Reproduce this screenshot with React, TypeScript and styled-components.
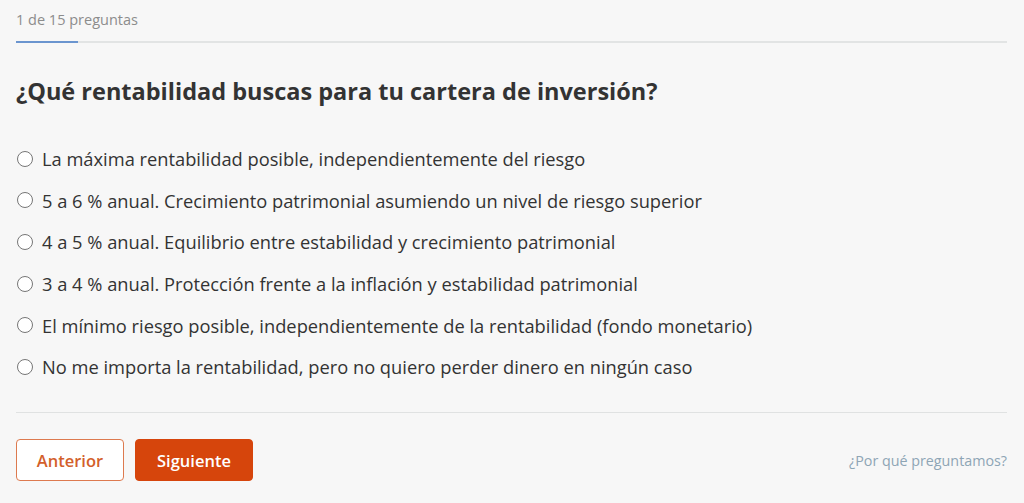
import * as React from "react";
import styled, { createGlobalStyle } from "styled-components";

const GlobalStyle = createGlobalStyle`
  html, body {
    margin: 0;
    padding: 0;
    background: #f7f7f7;
    font-family: "Open Sans", "Noto Sans", sans-serif;
    color: #333333;
  }
`;

const Page = styled.div`
  padding: 0 17px 0 16px;
`;

const Header = styled.div`
  padding-top: 10px;
`;

const Counter = styled.div`
  font-size: 14.5px;
  line-height: 19px;
  color: #8c8c8c;
`;

const Track = styled.div`
  margin-top: 12px;
  height: 2px;
  background: #e2e4e4;
  display: flex;
`;

const Fill = styled.div`
  height: 2px;
  background: #6b95cf;
`;

const Title = styled.h1`
  margin: 32px 0 0;
  font-size: 23.5px;
  line-height: 33px;
  font-weight: 700;
  color: #333333;
`;

const Options = styled.div`
  margin-top: 35px;
  display: flex;
  flex-direction: column;
  gap: 10.7px;
`;

const Option = styled.label`
  display: flex;
  align-items: center;
  height: 31px;
  font-size: 18.3px;
  color: #333333;
  cursor: pointer;
`;

const Radio = styled.span`
  width: 16px;
  height: 16px;
  box-sizing: border-box;
  border: 1px solid #767676;
  border-radius: 50%;
  background: #ffffff;
  margin: 0 9px 0 1px;
  flex-shrink: 0;
`;

const Divider = styled.div`
  margin-top: 30px;
  height: 1px;
  background: #e0e2e2;
`;

const Footer = styled.div`
  margin-top: 26px;
  display: flex;
  align-items: center;
  gap: 11px;
`;

const Button = styled.button<{ $primary?: boolean }>`
  height: 42px;
  width: ${(p) => (p.$primary ? "118px" : "108px")};
  padding: 0;
  font-family: inherit;
  font-size: 16.5px;
  font-weight: 600;
  border-radius: 4px;
  cursor: pointer;
  border: 1px solid ${(p) => (p.$primary ? "#d6450c" : "#dd7a4f")};
  background: ${(p) => (p.$primary ? "#d6450c" : "#ffffff")};
  color: ${(p) => (p.$primary ? "#ffffff" : "#d35f2b")};
`;

const HelpLink = styled.a`
  margin-left: auto;
  font-size: 14.3px;
  color: #8ea5b5;
  text-decoration: none;
  cursor: pointer;
`;

const answers = [
  "La máxima rentabilidad posible, independientemente del riesgo",
  "5 a 6 % anual. Crecimiento patrimonial asumiendo un nivel de riesgo superior",
  "4 a 5 % anual. Equilibrio entre estabilidad y crecimiento patrimonial",
  "3 a 4 % anual. Protección frente a la inflación y estabilidad patrimonial",
  "El mínimo riesgo posible, independientemente de la rentabilidad (fondo monetario)",
  "No me importa la rentabilidad, pero no quiero perder dinero en ningún caso",
];

const progress = 1 / 16;

export default function App() {
  return (
    <Page>
      <GlobalStyle />
      <Header>
        <Counter>1 de 15 preguntas</Counter>
        <Track>
          <Fill style={{ width: `${progress * 100}%` }} />
        </Track>
      </Header>
      <Title>¿Qué rentabilidad buscas para tu cartera de inversión?</Title>
      <Options>
        {answers.map((a) => (
          <Option key={a}>
            <Radio />
            {a}
          </Option>
        ))}
      </Options>
      <Divider />
      <Footer>
        <Button>Anterior</Button>
        <Button $primary>Siguiente</Button>
        <HelpLink>¿Por qué preguntamos?</HelpLink>
      </Footer>
    </Page>
  );
}
